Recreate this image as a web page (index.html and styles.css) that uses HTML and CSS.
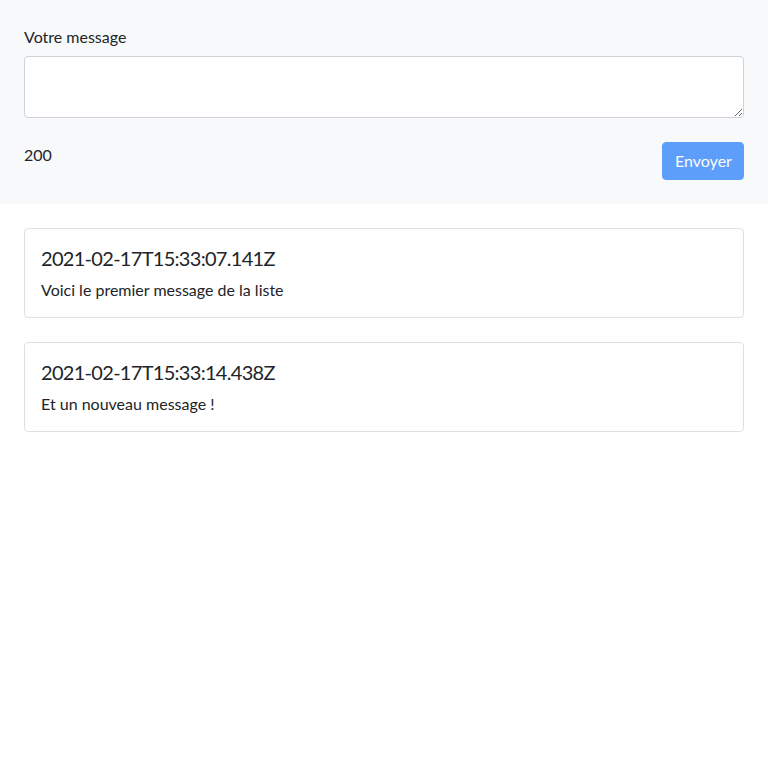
FILE: index.html
```html
<!DOCTYPE html>
<html lang="fr">
<head>
<meta charset="utf-8">
<title>Messages</title>
<link rel="stylesheet" href="styles.css">
</head>
<body>
<section class="composer">
  <label class="form-label" for="msg">Votre message</label>
  <textarea id="msg" class="form-control" rows="2"></textarea>
  <div class="composer-footer">
    <span class="counter">200</span>
    <button class="btn" type="button" disabled>Envoyer</button>
  </div>
</section>
<main class="list">
  <div class="card">
    <h5 class="card-title">2021-02-17T15:33:07.141Z</h5>
    <p class="card-text">Voici le premier message de la liste</p>
  </div>
  <div class="card">
    <h5 class="card-title">2021-02-17T15:33:14.438Z</h5>
    <p class="card-text">Et un nouveau message !</p>
  </div>
</main>
</body>
</html>
```
FILE: styles.css
```css
* { box-sizing: border-box; }
html, body { margin: 0; padding: 0; }
body {
  font-family: "Lato", "Noto Sans", sans-serif;
  font-size: 16px;
  line-height: 1.5;
  color: #212529;
  background: #fff;
}
.composer {
  background: #f8f9fa;
  padding: 24px;
  display: flex;
  flex-direction: column;
}
.form-label {
  display: block;
  padding-top: 1px;
  margin-bottom: 7px;
}
.form-control {
  display: block;
  width: 100%;
  height: 62px;
  padding: 6px 12px;
  font: inherit;
  color: #212529;
  background: #fff;
  border: 1px solid #ced4da;
  border-radius: 4px;
  resize: vertical;
}
.composer-footer {
  margin-top: 24px;
  display: flex;
  justify-content: space-between;
  align-items: flex-start;
}
.counter {
  padding-top: 1px;
}
.btn {
  font: inherit;
  color: #fff;
  background: #0d6efd;
  border: 1px solid #0d6efd;
  border-radius: 4px;
  padding: 6px 12px;
  width: 82px;
  opacity: 0.65;
}
.list {
  padding: 24px;
  display: flex;
  flex-direction: column;
  gap: 24px;
}
.card {
  border: 1px solid rgba(0,0,0,0.125);
  border-radius: 4px;
  padding: 16px;
}
.card-title {
  margin: 0 0 8px;
  font-size: 20px;
  font-weight: 400;
  line-height: 1.2;
  letter-spacing: -0.7px;
  padding-top: 1px;
  margin-bottom: 7px;
}
.card-text {
  margin: 0;
  padding-top: 1px;
  margin-bottom: -1px;
}
```
